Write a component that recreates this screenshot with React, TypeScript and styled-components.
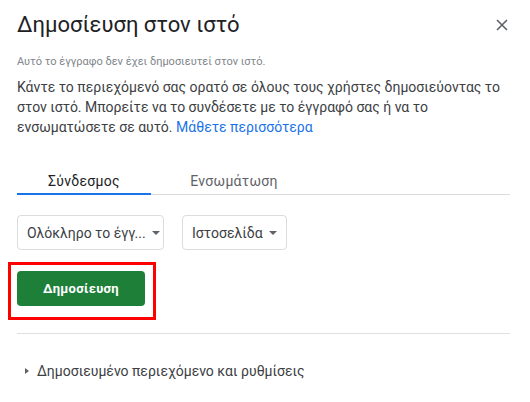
import styled, { createGlobalStyle } from "styled-components";

const GlobalStyle = createGlobalStyle`
  body {
    margin: 0;
    background: #fff;
    font-family: Roboto, "Noto Sans", Arial, sans-serif;
    color: #3c4043;
  }
`;

const App: React.FC = () => {
  return (
    <>
      <GlobalStyle />
      <Dialog>
        <Header>
          <Title>Δημοσίευση στον ιστό</Title>
          <CloseButton aria-label="Κλείσιμο">
            <svg width="12" height="12" viewBox="0 0 12 12">
              <path d="M1 1L11 11M11 1L1 11" stroke="#5f6368" strokeWidth="1.6" />
            </svg>
          </CloseButton>
        </Header>
        <Status>Αυτό το έγγραφο δεν έχει δημοσιευτεί στον ιστό.</Status>
        <Description>
          Κάντε το περιεχόμενό σας ορατό σε όλους τους χρήστες δημοσιεύοντας το
          στον ιστό. Μπορείτε να το συνδέσετε με το έγγραφό σας ή να το
          ενσωματώσετε σε αυτό. <LearnMore href="#">Μάθετε περισσότερα</LearnMore>
        </Description>

        <Tabs>
          <Tab $width={134} $active>
            Σύνδεσμος
          </Tab>
          <Tab $width={166}>Ενσωμάτωση</Tab>
        </Tabs>

        <SelectRow>
          <Select $width={147}>
            <span>Ολόκληρο το έγγ...</span>
            <Caret />
          </Select>
          <Select $width={105}>
            <span>Ιστοσελίδα</span>
            <Caret />
          </Select>
        </SelectRow>

        <Highlight>
          <PublishButton>Δημοσίευση</PublishButton>
        </Highlight>

        <Divider />

        <Settings>
          <Triangle />
          Δημοσιευμένο περιεχόμενο και ρυθμίσεις
        </Settings>
      </Dialog>
    </>
  );
};

export default App;

const Dialog = styled.div`
  width: 493px;
  padding: 0 20px 0 17px;
  display: flex;
  flex-direction: column;
`;

const Header = styled.div`
  display: flex;
  justify-content: space-between;
  align-items: center;
  height: 48px;
`;

const Title = styled.h1`
  margin: 0;
  font-size: 22px;
  font-weight: 400;
  color: #202124;
`;

const CloseButton = styled.button`
  border: none;
  background: none;
  padding: 0;
  margin-right: 2px;
  margin-top: 2px;
  display: flex;
  cursor: pointer;
`;

const Status = styled.div`
  margin-top: 7px;
  font-size: 11px;
  color: #80868b;
`;

const Description = styled.p`
  margin: 9px 0 0;
  font-size: 14px;
  line-height: 20px;
  color: #3c4043;
`;

const LearnMore = styled.a`
  color: #1a73e8;
  text-decoration: none;
`;

const Tabs = styled.div`
  margin-top: 30px;
  display: flex;
  border-bottom: 1px solid #dadce0;
`;

const Tab = styled.div<{ $width: number; $active?: boolean }>`
  width: ${(p) => p.$width}px;
  height: 20px;
  padding-top: 6px;
  display: flex;
  align-items: flex-start;
  justify-content: center;
  font-size: 14px;
  letter-spacing: 0.3px;
  color: ${(p) => (p.$active ? "#202124" : "#5f6368")};
  border-bottom: 2px solid ${(p) => (p.$active ? "#1a73e8" : "transparent")};
  margin-bottom: -1px;
`;

const SelectRow = styled.div`
  margin-top: 20px;
  display: flex;
  gap: 18px;
`;

const Select = styled.div<{ $width: number }>`
  box-sizing: border-box;
  width: ${(p) => p.$width}px;
  height: 35px;
  border: 1px solid #dadce0;
  border-radius: 4px;
  display: flex;
  align-items: center;
  gap: 6px;
  padding: 0 9px;
  font-size: 14px;
  color: #3c4043;
  white-space: nowrap;
  overflow: hidden;
`;

const Caret = styled.span`
  margin-left: auto;
  flex-shrink: 0;
  width: 0;
  height: 0;
  border-left: 4px solid transparent;
  border-right: 4px solid transparent;
  border-top: 4px solid #5f6368;
`;

const Highlight = styled.div`
  align-self: flex-start;
  margin: 12px 0 0 -9px;
  border: 3px solid #ff0000;
  padding: 6px 8px 11px 6px;
`;

const PublishButton = styled.button`
  width: 128px;
  height: 35px;
  border: none;
  border-radius: 4px;
  background: #1e8038;
  color: #fff;
  font-family: Roboto, "Noto Sans", Arial, sans-serif;
  font-size: 13px;
  font-weight: 700;
  letter-spacing: 0.3px;
  cursor: pointer;
`;

const Divider = styled.div`
  margin-top: 13px;
  height: 1px;
  background: #e0e0e0;
`;

const Settings = styled.div`
  margin-top: 29px;
  display: flex;
  align-items: center;
  gap: 8px;
  padding-left: 8px;
  font-size: 14px;
  color: #3c4043;
`;

const Triangle = styled.span`
  width: 0;
  height: 0;
  border-top: 3.5px solid transparent;
  border-bottom: 3.5px solid transparent;
  border-left: 4px solid #5f6368;
`;
